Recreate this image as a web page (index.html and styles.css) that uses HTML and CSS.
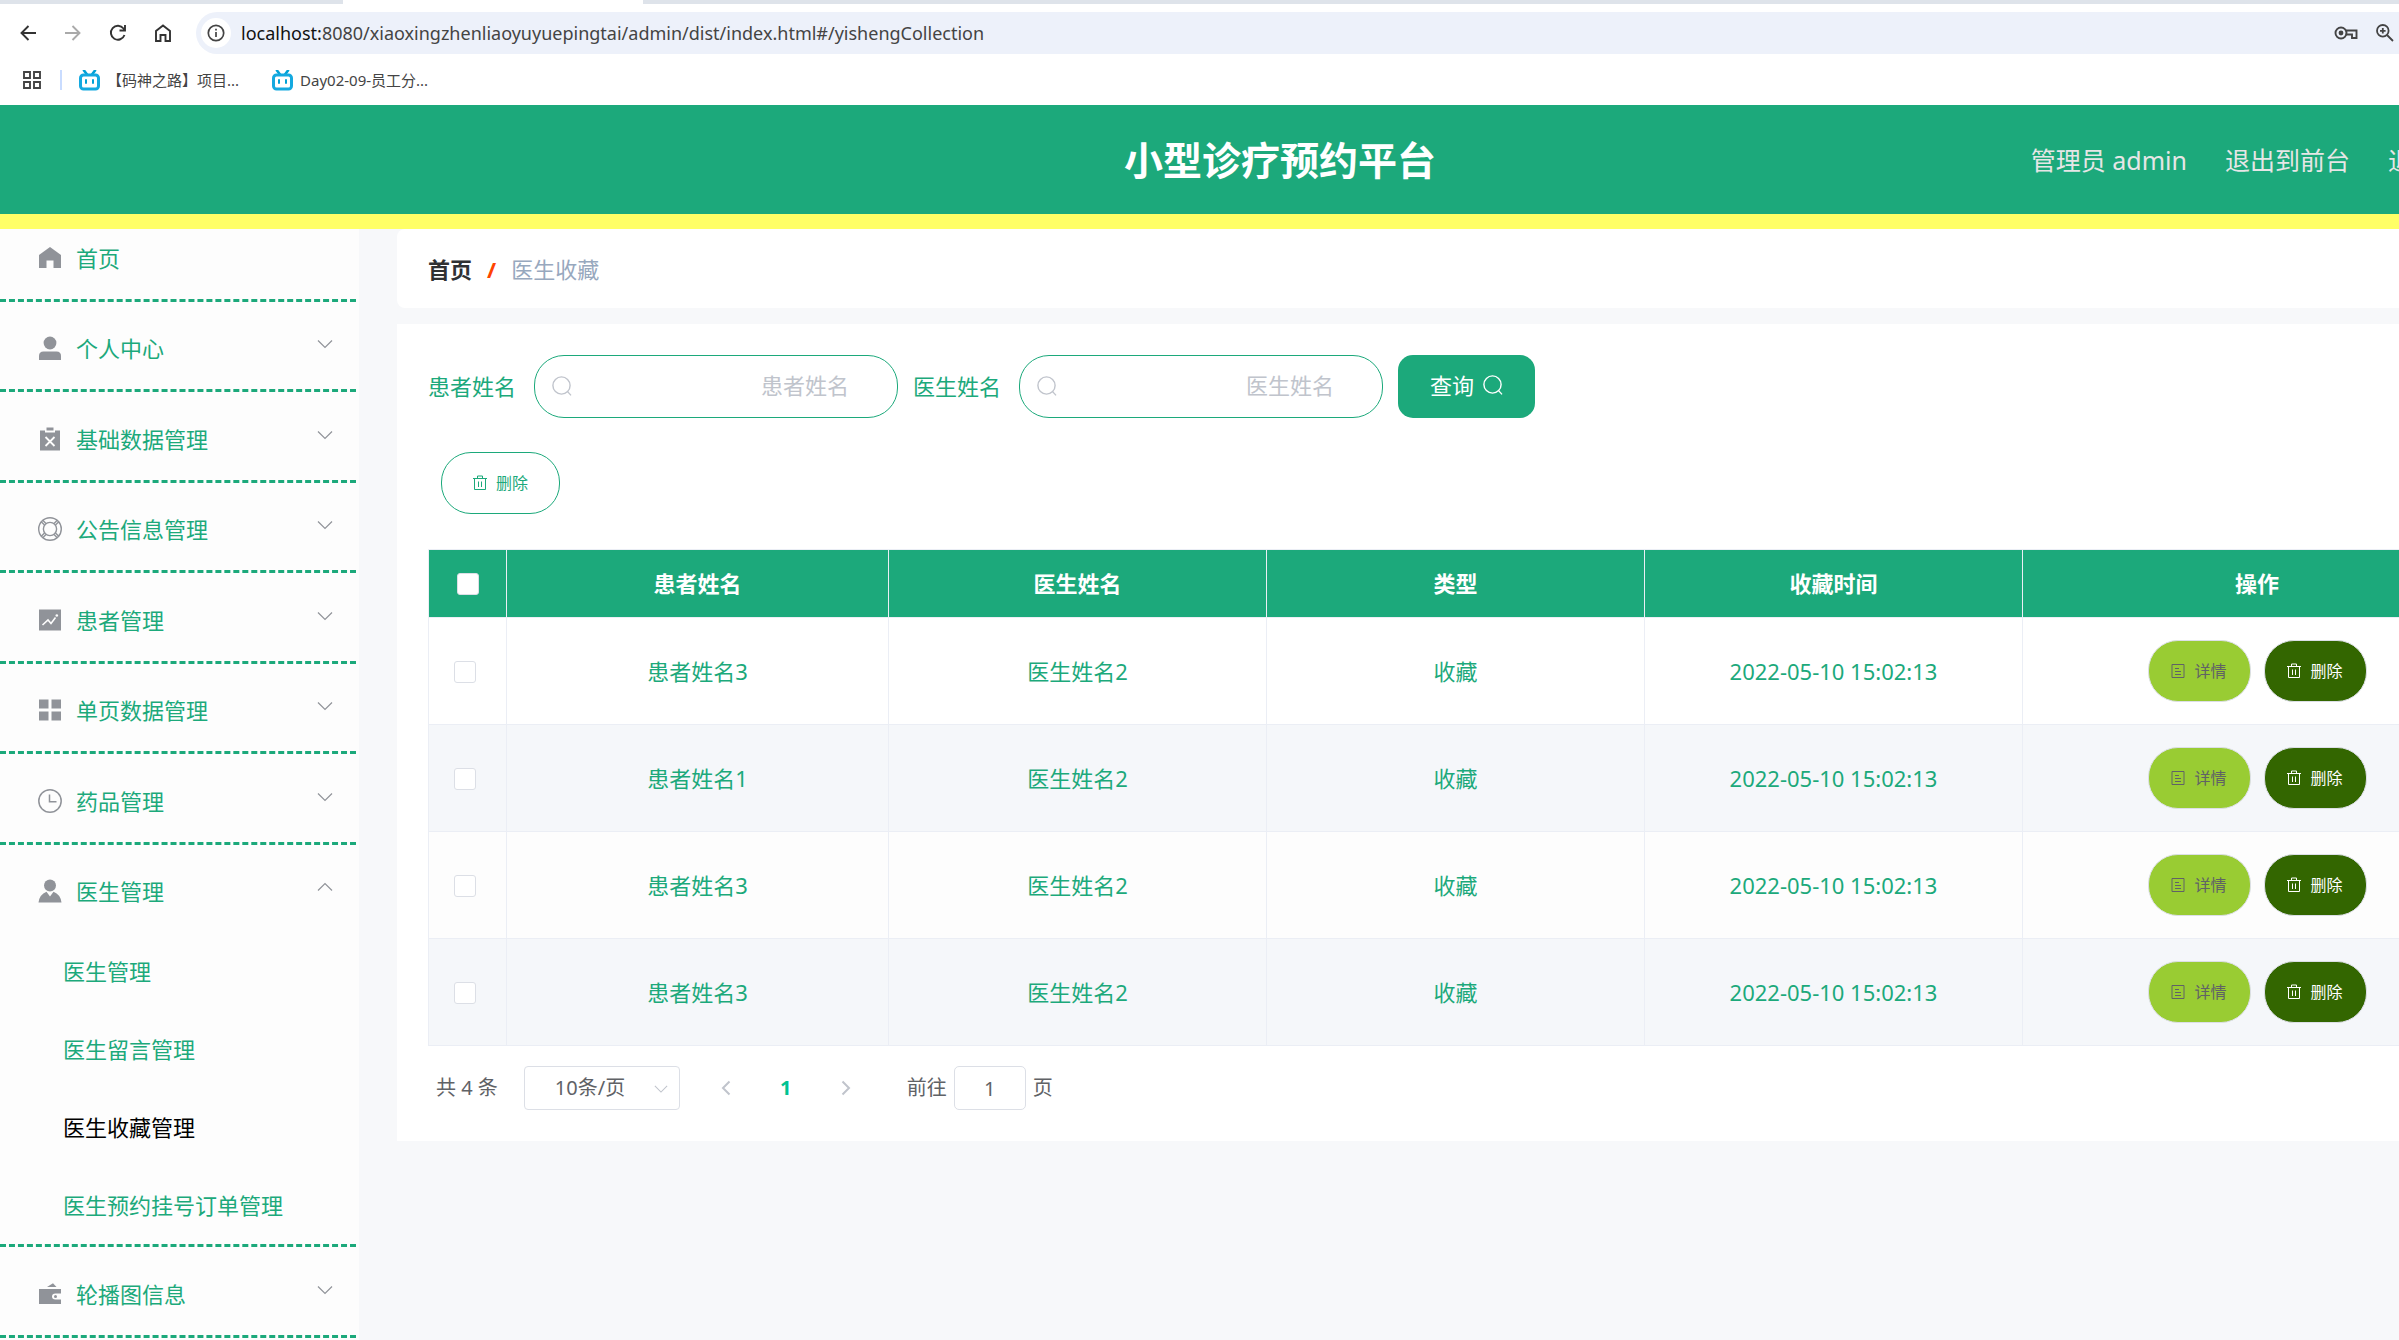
FILE: index.html
```html
<!DOCTYPE html>
<html lang="zh-CN">
<head>
    <meta charset="UTF-8">
    <meta name="viewport" content="width=device-width, initial-scale=1.0">
    <title>小型诊疗预约平台</title>
    <link rel="stylesheet" href="styles.css">
</head>
<body>
    <!-- shared icons -->
    <svg class="sprite" aria-hidden="true">
        <symbol id="arrow" viewBox="0 0 16 10"><path d="M1 1.5 L8 8.5 L15 1.5" fill="none" stroke="currentColor" stroke-width="1.2"/></symbol>
        <symbol id="search" viewBox="0 0 20 20"><circle cx="9.5" cy="9.5" r="8.6" fill="none" stroke="currentColor" stroke-width="1.4"/><path d="M15.6 15.6 L19 19.4" stroke="currentColor" stroke-width="1.4"/></symbol>
        <symbol id="trash" viewBox="0 0 14 16"><path d="M0 3.5 H14 M4.5 3.5 V1 H9.5 V3.5 M1.5 3.5 V14.5 H12.5 V3.5 M5.5 6.5 V12 M8.5 6.5 V12" fill="none" stroke="currentColor" stroke-width="1"/></symbol>
        <symbol id="doc" viewBox="0 0 14 16"><path d="M1 1.5 H13 V14.5 H1 Z M4 5.5 H8 M4 8.5 H10 M4 11.5 H10" fill="none" stroke="currentColor" stroke-width="1"/></symbol>
        <symbol id="tv" viewBox="0 0 21 21"><path d="M5 0.5 L8 4.5 M16 0.5 L13 4.5" stroke="#00a1d6" stroke-width="2.6" stroke-linecap="round"/><rect x="1.5" y="5" width="18" height="14" rx="3" fill="#fff" stroke="#14a9e0" stroke-width="3"/><path d="M7 10 V13 M14 10 V13" stroke="#00a1d6" stroke-width="2" stroke-linecap="round"/></symbol>
    </svg>

    <div class="browser">
        <div class="tabs"><div class="tab"></div></div>
        <div class="toolbar">
            <button class="nav-btn" aria-label="后退"><svg width="18" height="18" viewBox="0 0 18 18"><path d="M9.5 2 L2.5 9 L9.5 16 M2.5 9 H17" fill="none" stroke="currentColor" stroke-width="1.9"/></svg></button>
            <button class="nav-btn off" aria-label="前进"><svg width="18" height="18" viewBox="0 0 18 18"><path d="M8.5 2 L15.5 9 L8.5 16 M15.5 9 H1" fill="none" stroke="currentColor" stroke-width="1.9"/></svg></button>
            <button class="nav-btn" aria-label="刷新"><svg width="18" height="18" viewBox="0 0 18 18"><path d="M15.5 11 A7 7 0 1 1 14.5 4.5 L16 6 M16 1 V6.5 H10.5" fill="none" stroke="currentColor" stroke-width="1.9"/></svg></button>
            <button class="nav-btn" aria-label="主页"><svg width="18" height="18" viewBox="0 0 18 18"><path d="M2 17 V7 L9 1.5 L16 7 V17 H11.5 V11 H6.5 V17 Z" fill="none" stroke="currentColor" stroke-width="1.9"/></svg></button>
            <div class="address">
                <span class="info"><svg width="18" height="18" viewBox="0 0 18 18"><circle cx="9" cy="9" r="7.7" fill="none" stroke="currentColor" stroke-width="1.7"/><path d="M9 8 V13 M9 4.8 V6.6" stroke="currentColor" stroke-width="1.7"/></svg></span>
                <span class="url"><b>localhost:</b>8080/xiaoxingzhenliaoyuyuepingtai/admin/dist/index.html#/yishengCollection</span>
                <svg class="key" width="24" height="14" viewBox="0 0 24 14"><path d="M11.5 4.5 H22.5 V12 H18 V8.5 H11.5" fill="none" stroke="currentColor" stroke-width="1.9"/><circle cx="7" cy="7" r="5.5" fill="none" stroke="currentColor" stroke-width="1.9"/><circle cx="7" cy="7" r="2.4" fill="currentColor"/></svg>
                <svg width="18" height="18" viewBox="0 0 18 18"><circle cx="6.8" cy="6.8" r="5.8" fill="none" stroke="currentColor" stroke-width="1.8"/><path d="M11 11 L17 17 M6.8 4 V9.6 M4 6.8 H9.6" stroke="currentColor" stroke-width="1.8"/></svg>
            </div>
        </div>
        <div class="bookmarks">
            <svg width="18" height="18" viewBox="0 0 18 18"><path d="M1 1 H7 V7 H1 Z M11 1 H17 V7 H11 Z M1 11 H7 V17 H1 Z M11 11 H17 V17 H11 Z" fill="none" stroke="#444" stroke-width="1.9"/></svg>
            <span class="line"></span>
            <a class="bookmark" href="#"><svg width="21" height="21"><use href="#tv"/></svg>【码神之路】项目...</a>
            <a class="bookmark" href="#"><svg width="21" height="21"><use href="#tv"/></svg>Day02-09-员工分...</a>
        </div>
    </div>

    <header class="header">
        <h1>小型诊疗预约平台</h1>
        <div class="user">
            <span>管理员 admin</span>
            <a href="#">退出到前台</a>
            <a href="#">退出登录</a>
        </div>
    </header>

    <div class="wrapper">
        <ul class="menu">
            <li>
                <a class="menu-title" href="#"><svg class="icon" viewBox="0 0 24 24"><path d="M12 1 L23 9 V22 H15.5 V14.5 H8.5 V22 H1 V9 Z"/></svg>首页</a>
            </li>
            <li>
                <a class="menu-title" href="#"><svg class="icon" viewBox="0 0 24 24"><circle cx="12" cy="7" r="6.4"/><path d="M1 24 V20 Q1 15.5 5.5 15.5 H18.5 Q23 15.5 23 20 V24 Z"/></svg>个人中心<svg class="arrow"><use href="#arrow"/></svg></a>
            </li>
            <li>
                <a class="menu-title" href="#"><svg class="icon" viewBox="0 0 24 24"><path d="M8.5 0.5 H15.5 V3.5 H8.5 Z"/><path d="M2 3.5 H7 V5.5 H17 V3.5 H22 V23.5 H2 Z"/><path d="M7.5 10 L16.5 19 M16.5 10 L7.5 19" stroke="#fdfdfd" stroke-width="1.8"/></svg>基础数据管理<svg class="arrow"><use href="#arrow"/></svg></a>
            </li>
            <li>
                <a class="menu-title" href="#"><svg class="icon" viewBox="0 0 24 24"><g fill="none" stroke="#909399" stroke-width="1.4"><circle cx="12" cy="12" r="11.3"/><circle cx="12" cy="12" r="6.6"/><path d="M3 4.5 L6.5 8 M4.5 3 L8 6.5 M21 4.5 L17.5 8 M19.5 3 L16 6.5 M3 19.5 L6.5 16 M4.5 21 L8 17.5 M21 19.5 L17.5 16 M19.5 21 L16 17.5"/></g></svg>公告信息管理<svg class="arrow"><use href="#arrow"/></svg></a>
            </li>
            <li>
                <a class="menu-title" href="#"><svg class="icon" viewBox="0 0 24 24"><path d="M1 1.5 H23 V22.5 H1 Z"/><path d="M4.5 17 L10 12 L13 15.5 L17.5 9.5" fill="none" stroke="#fdfdfd" stroke-width="1.6"/><circle cx="18.8" cy="7.5" r="1.3" fill="#fdfdfd"/></svg>患者管理<svg class="arrow"><use href="#arrow"/></svg></a>
            </li>
            <li>
                <a class="menu-title" href="#"><svg class="icon" viewBox="0 0 24 24"><path d="M1 1.5 H10.5 V10.5 H1 Z M13.5 1.5 H23 V10.5 H13.5 Z M1 13.5 H10.5 V22.5 H1 Z M13.5 13.5 H23 V22.5 H13.5 Z"/></svg>单页数据管理<svg class="arrow"><use href="#arrow"/></svg></a>
            </li>
            <li>
                <a class="menu-title" href="#"><svg class="icon" viewBox="0 0 24 24"><g fill="none" stroke="#909399" stroke-width="1.5"><circle cx="12" cy="12" r="11.2"/><path d="M11.5 5.5 V12.7 H18.5"/></g></svg>药品管理<svg class="arrow"><use href="#arrow"/></svg></a>
            </li>
            <li>
                <a class="menu-title" href="#"><svg class="icon" viewBox="0 0 24 24"><circle cx="12" cy="6.5" r="6"/><path d="M0.5 23.5 Q1.5 15.5 8.5 12.8 L12 17.5 L15.5 12.8 Q22.5 15.5 23.5 23.5 Z"/></svg>医生管理<svg class="arrow open"><use href="#arrow"/></svg></a>
                <ul class="submenu">
                    <li><a href="#">医生管理</a></li>
                    <li><a href="#">医生留言管理</a></li>
                    <li><a class="active" href="#">医生收藏管理</a></li>
                    <li><a href="#">医生预约挂号订单管理</a></li>
                </ul>
            </li>
            <li>
                <a class="menu-title" href="#"><svg class="icon" viewBox="0 0 24 24"><path d="M9 5 L15 1.2 L18.5 5 Z"/><path d="M1 7 H23 V11.5 H17.5 Q14 11.5 14 14.5 Q14 17.5 17.5 17.5 H23 V22 H1 Z"/><circle cx="17.5" cy="14.5" r="1.5"/></svg>轮播图信息<svg class="arrow"><use href="#arrow"/></svg></a>
            </li>
        </ul>

        <main class="main">
            <nav class="breadcrumb">
                <a href="#">首页</a><span class="slash">/</span><span>医生收藏</span>
            </nav>

            <section class="content">
                <form class="search-form">
                    <label for="patientName">患者姓名</label>
                    <div class="search-input">
                        <svg><use href="#search"/></svg>
                        <input type="text" id="patientName" placeholder="患者姓名">
                    </div>
                    <label for="doctorName">医生姓名</label>
                    <div class="search-input">
                        <svg><use href="#search"/></svg>
                        <input type="text" id="doctorName" placeholder="医生姓名">
                    </div>
                    <button type="button" class="query-btn">查询<svg><use href="#search"/></svg></button>
                </form>

                <button type="button" class="btn delete-all"><svg><use href="#trash"/></svg>删除</button>

                <table class="data-table">
                    <colgroup>
                        <col class="col-check">
                        <col class="col-name">
                        <col class="col-text">
                        <col class="col-text">
                        <col class="col-text">
                        <col>
                    </colgroup>
                    <thead>
                        <tr>
                            <th><input type="checkbox" aria-label="全选"></th>
                            <th>患者姓名</th>
                            <th>医生姓名</th>
                            <th>类型</th>
                            <th>收藏时间</th>
                            <th>操作</th>
                        </tr>
                    </thead>
                    <tbody>
                        <tr>
                            <td><input type="checkbox" aria-label="选择"></td>
                            <td>患者姓名3</td>
                            <td>医生姓名2</td>
                            <td>收藏</td>
                            <td>2022-05-10 15:02:13</td>
                            <td><div class="actions"><button class="btn detail"><svg><use href="#doc"/></svg>详情</button><button class="btn remove"><svg><use href="#trash"/></svg>删除</button></div></td>
                        </tr>
                        <tr>
                            <td><input type="checkbox" aria-label="选择"></td>
                            <td>患者姓名1</td>
                            <td>医生姓名2</td>
                            <td>收藏</td>
                            <td>2022-05-10 15:02:13</td>
                            <td><div class="actions"><button class="btn detail"><svg><use href="#doc"/></svg>详情</button><button class="btn remove"><svg><use href="#trash"/></svg>删除</button></div></td>
                        </tr>
                        <tr>
                            <td><input type="checkbox" aria-label="选择"></td>
                            <td>患者姓名3</td>
                            <td>医生姓名2</td>
                            <td>收藏</td>
                            <td>2022-05-10 15:02:13</td>
                            <td><div class="actions"><button class="btn detail"><svg><use href="#doc"/></svg>详情</button><button class="btn remove"><svg><use href="#trash"/></svg>删除</button></div></td>
                        </tr>
                        <tr>
                            <td><input type="checkbox" aria-label="选择"></td>
                            <td>患者姓名3</td>
                            <td>医生姓名2</td>
                            <td>收藏</td>
                            <td>2022-05-10 15:02:13</td>
                            <td><div class="actions"><button class="btn detail"><svg><use href="#doc"/></svg>详情</button><button class="btn remove"><svg><use href="#trash"/></svg>删除</button></div></td>
                        </tr>
                    </tbody>
                </table>

                <div class="pagination">
                    <span class="total">共 4 条</span>
                    <div class="page-size">
                        <select aria-label="每页条数">
                            <option>10条/页</option>
                            <option>20条/页</option>
                        </select>
                        <svg><use href="#arrow"/></svg>
                    </div>
                    <button class="pager" aria-label="上一页"><svg viewBox="0 0 10 16"><path d="M8.5 1.5 L2 8 L8.5 14.5"/></svg></button>
                    <button class="pager current">1</button>
                    <button class="pager" aria-label="下一页"><svg viewBox="0 0 10 16"><path d="M1.5 1.5 L8 8 L1.5 14.5"/></svg></button>
                    <label class="jump" for="jumpPage">前往</label>
                    <input type="text" id="jumpPage" value="1">
                    <span>页</span>
                </div>
            </section>
        </main>
    </div>
</body>
</html>
```

FILE: styles.css
```css
* {
    box-sizing: border-box;
}
html {
    overflow: hidden;
}
body {
    margin: 0;
    min-width: 2560px;
    min-height: 100vh;
    display: flex;
    flex-direction: column;
    background-color: #f7f8fa;
    font-family: "Noto Sans", "Noto Sans CJK SC", sans-serif;
    font-size: 22px;
    line-height: 32px;
    color: #1ca97b;
}
a {
    color: inherit;
    text-decoration: none;
}
ul {
    list-style: none;
    margin: 0;
    padding: 0;
}
button, input, select {
    font: inherit;
    color: inherit;
}
button {
    cursor: pointer;
}
svg {
    flex: none;
}
.sprite {
    display: none;
}

/* browser bar */
.browser {
    height: 105px;
    background-color: #fff;
    color: #444;
}
.tabs {
    height: 8px;
    background: linear-gradient(#dee3ea 4px, #fff 4px);
}
.tab {
    width: 300px;
    height: 8px;
    margin-left: 343px;
    background-color: #fff;
}
.toolbar {
    display: flex;
    align-items: center;
    padding: 4px 0 0 5px;
}
.nav-btn {
    width: 45px;
    height: 42px;
    padding: 0;
    border: none;
    background: none;
    color: #333;
    display: flex;
    align-items: center;
    justify-content: center;
}
.nav-btn.off {
    color: #aaa;
}
.address {
    flex: 1;
    display: flex;
    align-items: center;
    height: 42px;
    margin-left: 11px;
    padding: 0 166px 0 5px;
    border-radius: 21px 0 0 21px;
    background-color: #edf1fa;
}
.info {
    width: 30px;
    height: 30px;
    border-radius: 50%;
    background-color: #fff;
    display: flex;
    align-items: center;
    justify-content: center;
}
.url {
    margin: 0 auto 0 10px;
    font-size: 18px;
}
.url b {
    font-weight: normal;
    color: #111;
}
.key {
    margin-right: 18px;
}
.bookmarks {
    display: flex;
    align-items: center;
    height: 52px;
    padding-left: 23px;
    font-size: 15px;
}
.line {
    width: 2px;
    height: 20px;
    margin: 0 17px 0 19px;
    background-color: #c9dcff;
}
.bookmark {
    display: flex;
    align-items: center;
    gap: 7px;
    margin-right: 33px;
}

/* header */
.header {
    display: grid;
    grid-template-columns: 1fr auto 1fr;
    align-items: center;
    height: 124px;
    background-color: #1ca97b;
    border-bottom: 15px solid #ffff66;
}
.header h1 {
    grid-column: 2;
    margin: 0;
    font-size: 39px;
    line-height: 56px;
    color: #fff;
}
.user {
    display: flex;
    justify-content: flex-end;
    gap: 38px;
    padding-right: 72px;
    font-size: 25px;
    color: #e6e6e6;
}

.wrapper {
    flex: 1;
    display: flex;
}

/* side menu */
.menu {
    width: 359px;
    padding-right: 3px;
    background-color: #fdfdfd;
}
.menu > li {
    border-bottom: 3px dashed #1ca97b;
}
.menu-title {
    display: flex;
    align-items: center;
    padding: 30px 23px 25px 38px;
}
.menu > li:nth-child(odd) .menu-title {
    padding-top: 31px;
}
.menu > li:first-child .menu-title {
    padding-top: 13px;
}
.icon {
    width: 24px;
    height: 24px;
    margin-right: 14px;
    fill: #909399;
}
.arrow {
    width: 16px;
    height: 10px;
    margin: 0 0 9px auto;
    color: #909399;
}
.arrow.open {
    transform: rotate(180deg);
}
.submenu a {
    display: block;
    padding-left: 63px;
    line-height: 78px;
}
.submenu .active {
    color: #000;
}

/* content */
.main {
    flex: 1;
    padding: 0 37px 0 38px;
}
.breadcrumb {
    display: flex;
    align-items: center;
    height: 79px;
    padding: 0 31px;
    margin-bottom: 16px;
    border-radius: 8px;
    background-color: #fff;
    color: #97a8be;
}
.breadcrumb a {
    font-weight: bold;
    color: #303133;
}
.slash {
    margin: 0 15px;
    font-weight: bold;
    color: #ff4400;
}
.content {
    padding: 31px;
    background-color: #fff;
}
.search-form {
    display: flex;
    align-items: center;
}
.search-form label {
    padding-bottom: 2px;
}
.search-input {
    position: relative;
    margin: 0 15px 0 18px;
}
.search-input svg {
    position: absolute;
    left: 18px;
    top: 21px;
    width: 20px;
    height: 20px;
    color: #c0c4cc;
}
.search-input input {
    display: block;
    width: 364px;
    height: 63px;
    padding: 0 48px 3px;
    border: 1px solid #1ca97b;
    border-radius: 30px;
    background: none;
    text-align: right;
}
.search-input input::placeholder {
    color: #c0c4cc;
    opacity: 1;
}
.query-btn {
    display: flex;
    align-items: center;
    gap: 9px;
    height: 63px;
    padding: 0 32px 3px;
    border: none;
    border-radius: 15px;
    background-color: #1ca97b;
    color: #fff;
}
.query-btn svg {
    width: 20px;
    height: 20px;
}
.btn {
    display: flex;
    align-items: center;
    justify-content: center;
    gap: 9px;
    width: 103px;
    height: 62px;
    padding: 0 0 1px;
    border: 1px solid #dcdfe6;
    border-radius: 30px;
    font-size: 16px;
}
.btn svg {
    width: 14px;
    height: 16px;
}
.delete-all {
    width: 119px;
    margin: 34px 13px 35px;
    border-color: #1ca97b;
    background-color: #fff;
}
.detail {
    background-color: #99cc33;
    color: #606266;
}
.remove {
    background-color: #336600;
    color: #fff;
}
.actions {
    display: flex;
    justify-content: center;
    gap: 13px;
}

/* table */
.data-table {
    width: 100%;
    table-layout: fixed;
    border-collapse: collapse;
    text-align: center;
}
.col-check {
    width: 78px;
}
.col-name {
    width: 382px;
}
.col-text {
    width: 378px;
}
.data-table th, .data-table td {
    padding: 0;
    border: 1px solid #ebeef5;
}
.data-table th {
    height: 68px;
    background-color: #1ca97b;
    color: #fff;
}
.data-table th:not(:first-child) {
    padding-bottom: 2px;
}
.data-table td {
    height: 107px;
}
.data-table tbody tr:nth-child(even) {
    background-color: #f5f7fa;
}
.data-table tbody tr:nth-child(3) {
    background-color: #fdfdfd;
}
.data-table input {
    appearance: none;
    display: block;
    width: 22px;
    height: 22px;
    margin: 0 auto;
    border: 1px solid #dcdfe6;
    border-radius: 3px;
    background-color: #fff;
}
.data-table td:first-child {
    padding: 2px 5px 0 0;
}

/* pagination */
.pagination {
    display: flex;
    align-items: center;
    padding: 20px 0 0 8px;
    font-size: 20px;
    color: #606266;
}
.page-size {
    position: relative;
    margin: 0 16px 0 26px;
}
.page-size select {
    display: block;
    appearance: none;
    width: 156px;
    height: 44px;
    padding: 0 30px;
    border: 1px solid #dcdfe6;
    border-radius: 4px;
    background-color: #fff;
}
.page-size svg {
    position: absolute;
    right: 12px;
    top: 18px;
    width: 14px;
    height: 10px;
    color: #c0c4cc;
}
.pager {
    width: 60px;
    padding: 0;
    border: none;
    background: none;
}
.pager svg {
    display: block;
    width: 10px;
    height: 16px;
    margin: 0 auto;
    fill: none;
    stroke: #c0c4cc;
    stroke-width: 2;
}
.pager.current {
    font-weight: bold;
    color: #00c292;
}
.jump {
    margin-left: 31px;
}
.pagination input {
    width: 72px;
    height: 44px;
    margin: 0 7px;
    padding: 0;
    border: 1px solid #dcdfe6;
    border-radius: 5px;
    text-align: center;
}
```
